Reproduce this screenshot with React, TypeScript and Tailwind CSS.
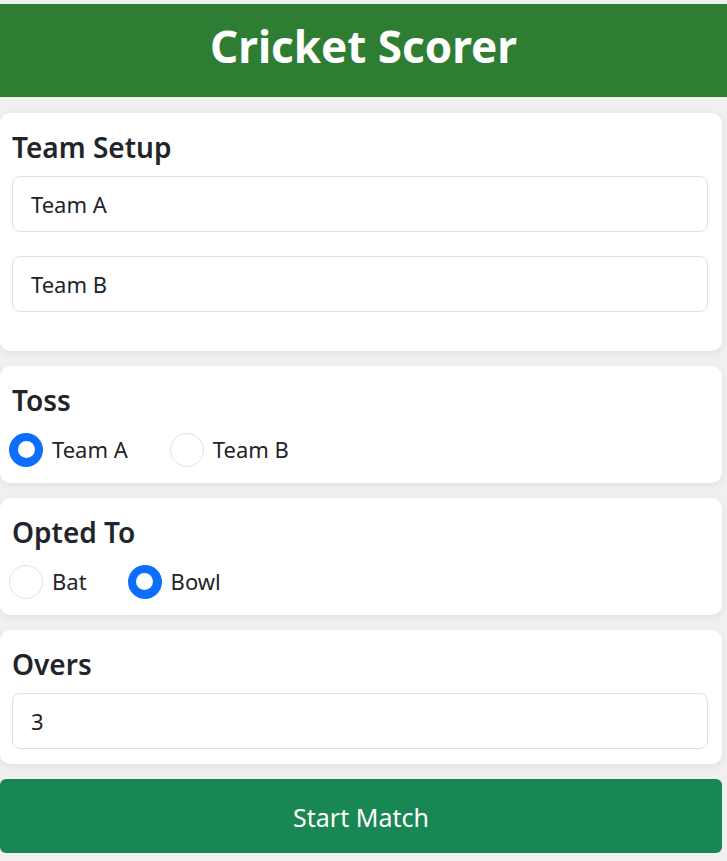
import React, { useState } from 'react';

const font = { fontFamily: '"Noto Sans", "Open Sans", sans-serif' };

// Bootstrap-style radio drawn with plain spans
const Radio = ({ checked, label, onClick }: { checked: boolean; label: string; onClick: () => void }) => (
    <button type="button" onClick={onClick} className="flex items-center gap-[9px] h-[35px]">
        <span
            className={`flex h-[34px] w-[34px] items-center justify-center rounded-full ${
                checked ? 'bg-[#0d6efd]' : 'bg-white border border-[#dee2e6]'
            }`}
        >
            {checked && <span className="h-[17px] w-[17px] rounded-full bg-white" />}
        </span>
        <span className="text-[22px] text-[#212529]">{label}</span>
    </button>
);

const Card = ({ title, children, className = '' }: { title: string; children: React.ReactNode; className?: string }) => (
    <section className={`w-[722px] rounded-[10px] bg-white pl-3 pr-[14px] pt-4 shadow-[0_2px_8px_rgba(0,0,0,0.07)] ${className}`}>
        <h2 className="text-[28px] leading-[36px] font-semibold text-[#212529]">{title}</h2>
        {children}
    </section>
);

const TextInput = ({ value, onChange, className = '' }: { value: string; onChange: (v: string) => void; className?: string }) => (
    <input
        value={value}
        onChange={(e) => onChange(e.target.value)}
        className={`block w-full h-[56px] rounded-lg border border-[#dee2e6] bg-white px-[18px] text-[22px] text-[#212529] outline-none ${className}`}
    />
);

export default function App() {
    const [teamA, setTeamA] = useState('Team A');
    const [teamB, setTeamB] = useState('Team B');
    const [toss, setToss] = useState<'A' | 'B'>('A');
    const [opted, setOpted] = useState<'bat' | 'bowl'>('bowl');
    const [overs, setOvers] = useState('3');

    return (
        <div className="min-h-screen w-full bg-[#f0f0f0] pt-1" style={font}>
            <header className="flex h-[93px] items-center justify-center bg-[#2e7d32] pb-[10px]">
                <h1 className="text-[44px] font-bold leading-none text-white">Cricket Scorer</h1>
            </header>

            <main className="flex flex-col gap-[15px] pt-4 pb-2">
                <Card title="Team Setup" className="pb-[39px]">
                    <TextInput value={teamA} onChange={setTeamA} className="mt-[11px]" />
                    <TextInput value={teamB} onChange={setTeamB} className="mt-6" />
                </Card>

                <Card title="Toss" className="pb-4">
                    <div className="mt-[14px] -ml-[3px] flex items-center gap-[42px]">
                        <Radio checked={toss === 'A'} label={teamA} onClick={() => setToss('A')} />
                        <Radio checked={toss === 'B'} label={teamB} onClick={() => setToss('B')} />
                    </div>
                </Card>

                <Card title="Opted To" className="pb-4">
                    <div className="mt-[14px] -ml-[3px] flex items-center gap-[41px]">
                        <Radio checked={opted === 'bat'} label="Bat" onClick={() => setOpted('bat')} />
                        <Radio checked={opted === 'bowl'} label="Bowl" onClick={() => setOpted('bowl')} />
                    </div>
                </Card>

                <Card title="Overs" className="pb-[15px]">
                    <TextInput value={overs} onChange={setOvers} className="mt-[11px]" />
                </Card>

                <button
                    type="button"
                    className="h-[74px] w-[722px] rounded-md bg-[#198754] pt-1 text-[25px] text-white"
                >
                    Start Match
                </button>
            </main>
        </div>
    );
}
